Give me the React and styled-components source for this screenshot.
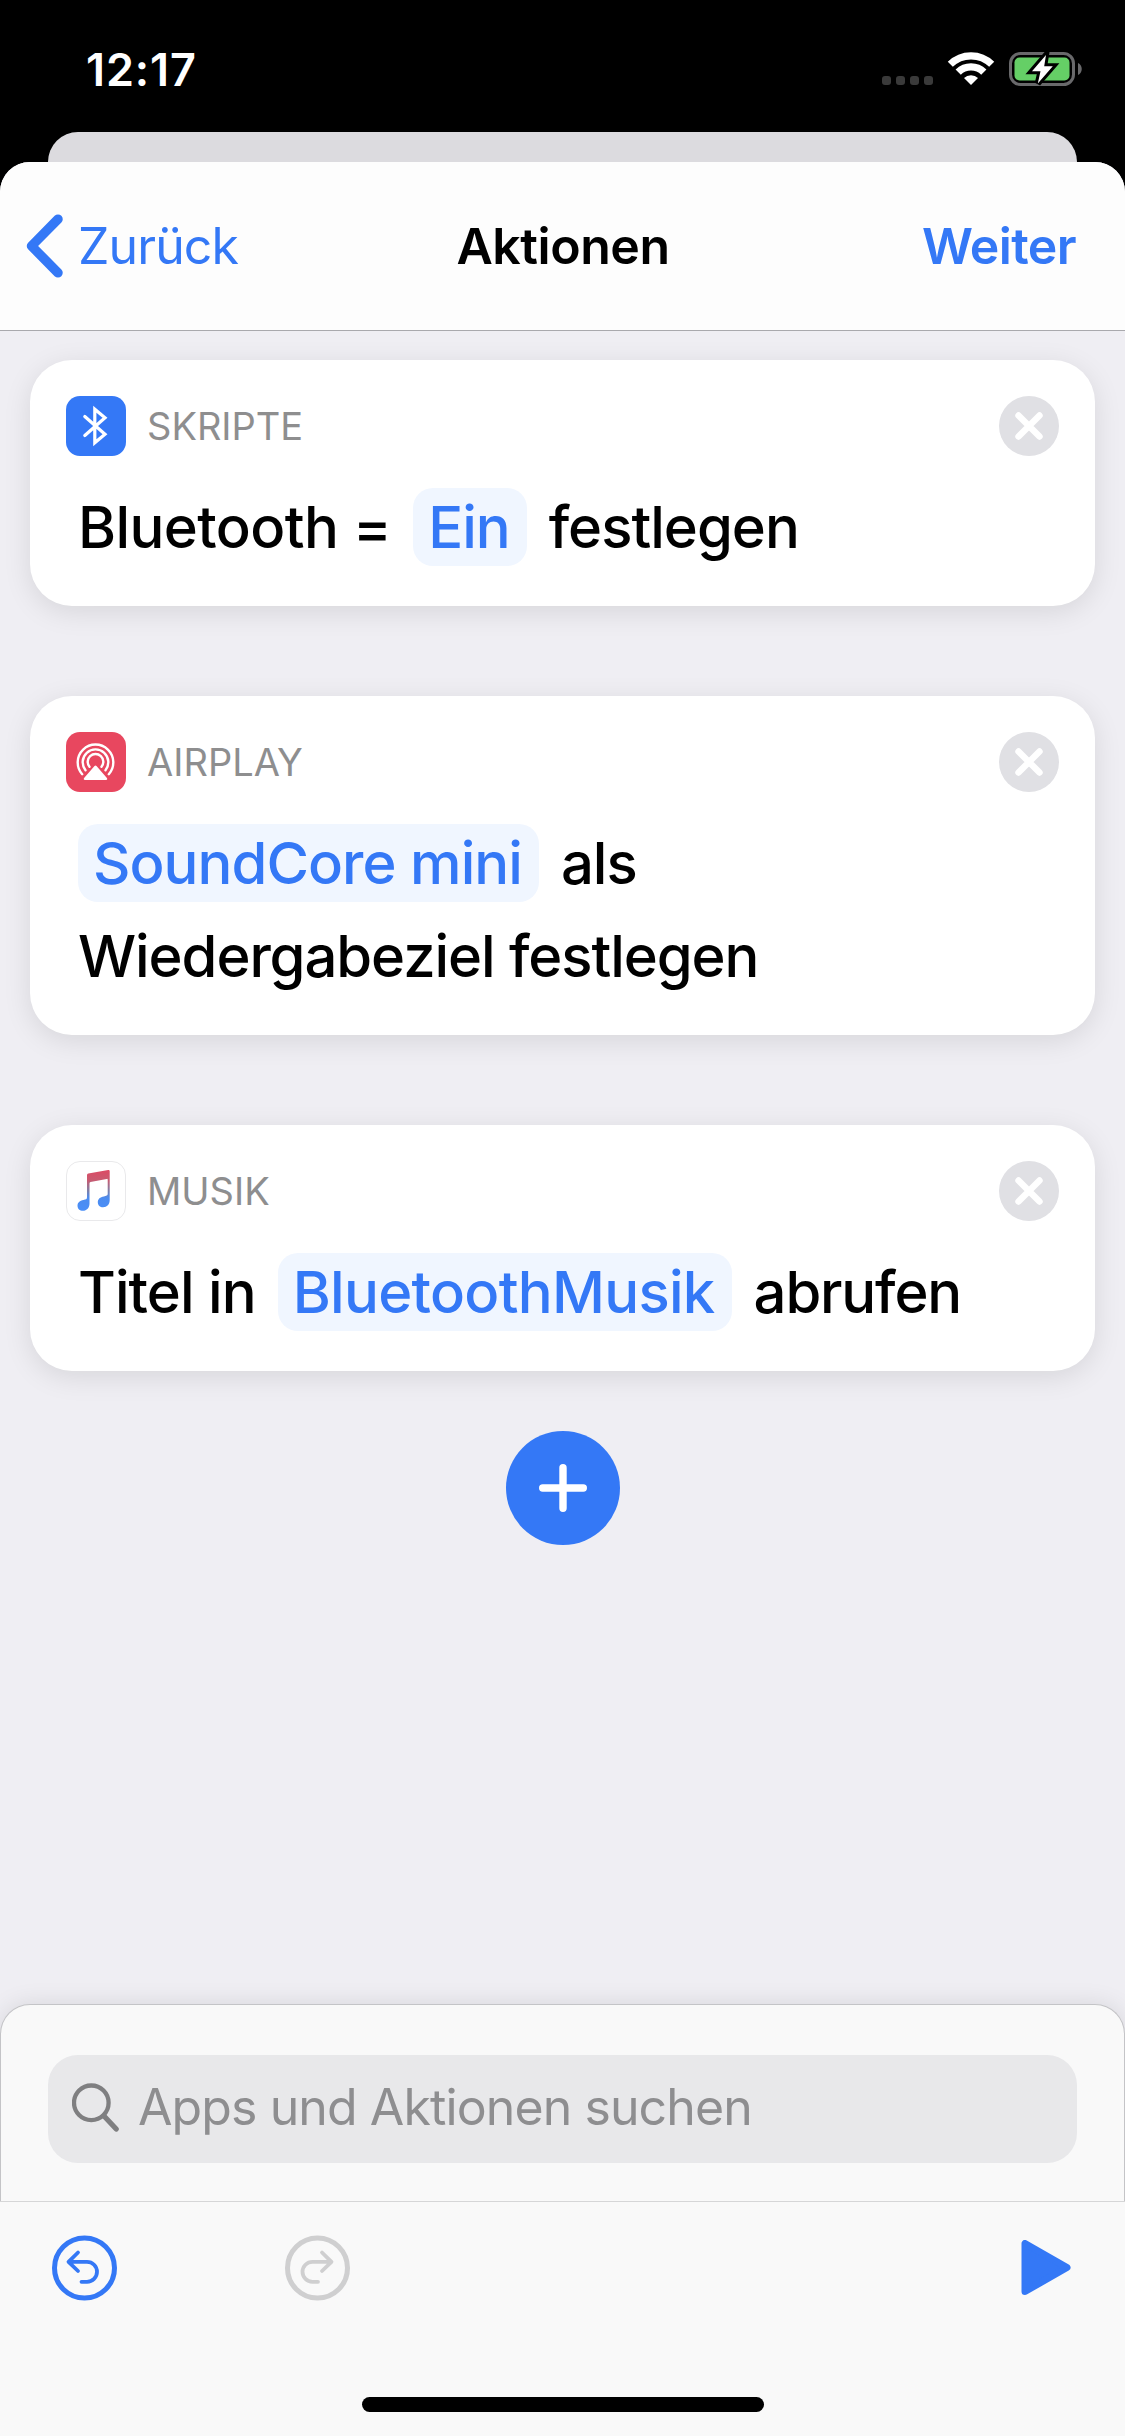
import React from "react";
import styled, { createGlobalStyle } from "styled-components";

const GlobalStyle = createGlobalStyle`
	* {
		box-sizing: border-box;
	}
	body {
		margin: 0;
		background: #000;
		font-family: Inter, "Liberation Sans", sans-serif;
	}
	svg {
		display: block;
		flex: none;
	}
	button {
		padding: 0;
		border: none;
		background: none;
		font: inherit;
		color: inherit;
		cursor: pointer;
	}
`;

const Screen = styled.div`
	width: 1125px;
	height: 2436px;
	display: flex;
	flex-direction: column;
	background: #000;
	overflow: hidden;
`;

const StatusBar = styled.div`
	height: 132px;
	padding: 6px 42px 0 86px;
	display: flex;
	align-items: center;
	justify-content: space-between;
	color: #fff;
`;

const Time = styled.span`
	font-size: 45px;
	font-weight: 600;
	letter-spacing: 0.9px;
`;

const StatusIcons = styled.div`
	display: flex;
	align-items: center;
	gap: 14px;
`;

const Dots = styled.div`
	display: flex;
	gap: 5px;
	margin-top: 23px;
`;

const Dot = styled.span`
	width: 9px;
	height: 9px;
	border-radius: 3px;
	background: #3a3a3a;
`;

const BackSheet = styled.div`
	height: 30px;
	margin: 0 48px;
	border-radius: 30px 30px 0 0;
	background: #dcdbdf;
`;

const Sheet = styled.div`
	flex: 1;
	display: flex;
	flex-direction: column;
	border-radius: 30px 30px 0 0;
	background: #efeef3;
	overflow: hidden;
`;

const NavBar = styled.div`
	height: 169px;
	padding: 0 49px 0 26px;
	display: grid;
	grid-template-columns: 1fr auto 1fr;
	align-items: center;
	background: #fdfdfd;
	border-bottom: 1px solid #a9a9ad;
	font-size: 50px;
	line-height: 60px;
`;

const BackButton = styled.button`
	display: flex;
	align-items: center;
	gap: 14px;
	color: #3478f6;
	letter-spacing: -0.9px;
`;

const Title = styled.div`
	font-weight: 600;
	letter-spacing: -0.45px;
	padding-left: 24px;
`;

const NextButton = styled.button`
	justify-self: end;
	font-weight: 600;
	color: #3478f6;
	letter-spacing: -0.6px;
`;

const Content = styled.div`
	flex: 1;
	padding: 29px 30px 0;
	display: flex;
	flex-direction: column;
	align-items: center;
`;

const CardList = styled.div`
	width: 100%;
	display: flex;
	flex-direction: column;
	gap: 90px;
`;

const Card = styled.div`
	padding: 36px 36px 33px;
	border-radius: 42px;
	background: #fff;
	box-shadow: 0 6px 28px rgba(0, 0, 0, 0.1);
`;

const CardHeader = styled.div`
	display: flex;
	align-items: center;
	height: 60px;
`;

const Label = styled.div`
	flex: 1;
	padding-left: 21px;
	font-size: 38px;
	line-height: 60px;
	color: #8e8e8f;
`;

const CardBody = styled.div`
	padding: 24px 0 0 12px;
`;

const Line = styled.div`
	height: 93px;
	display: flex;
	align-items: center;
	gap: 22px;
	font-size: 58px;
	font-weight: 500;
	line-height: 78px;
	white-space: nowrap;
`;

const Word = styled.span`
	letter-spacing: ${(props) => props.$tracking || -1}px;
`;

const Token = styled(Word)`
	height: 78px;
	padding: 0 17px 0 15px;
	border-radius: 20px;
	background: #f0f6ff;
	color: #3478f6;
`;

const AddButton = styled.button`
	width: 114px;
	height: 114px;
	margin-top: 60px;
	border-radius: 50%;
	display: flex;
	align-items: center;
	justify-content: center;
	background: #3478f6;
`;

const SearchPanel = styled.div`
	padding: 50px 47px 38px;
	border: 1px solid #c4c4c7;
	border-bottom: none;
	border-radius: 30px 30px 0 0;
	background: #f9f9f9;
	box-shadow: 0 0 24px rgba(0, 0, 0, 0.1);
`;

const SearchField = styled.div`
	height: 108px;
	padding: 0 24px 4px;
	display: flex;
	align-items: center;
	gap: 18px;
	border-radius: 30px;
	background: #e8e8ea;
	color: #8e8e90;
	font-size: 50px;
	letter-spacing: -0.9px;
`;

const Toolbar = styled.div`
	position: relative;
	height: 235px;
	padding: 33px 54px 24px 51px;
	display: flex;
	flex-direction: column;
	justify-content: space-between;
	background: #f9f9f9;
	border-top: 1px solid #d6d6d7;
`;

const Tools = styled.div`
	display: flex;
	align-items: center;
	gap: 167px;
`;

const PlayButton = styled.button`
	margin-left: auto;
`;

const HomeIndicator = styled.div`
	width: 402px;
	height: 15px;
	margin-right: -3px;
	align-self: center;
	border-radius: 8px;
	background: #000;
`;

const WifiIcon = () => (
	<svg width="48" height="34" viewBox="0 0 48 34" fill="none" stroke="#fff">
		<path d="M3.3 12.3a29.4 29.4 0 0 1 41.4 0" strokeWidth="7.2" />
		<path d="M11.2 20.2a18.1 18.1 0 0 1 25.6 0" strokeWidth="7.4" />
		<path d="M24 33l-7-7a10 10 0 0 1 14 0z" fill="#fff" stroke="none" />
	</svg>
);

const BatteryIcon = () => (
	<svg width="74" height="36" viewBox="0 0 74 36">
		<rect x="1.5" y="2.5" width="63" height="31" rx="10" fill="none" stroke="#69696b" strokeWidth="3" />
		<rect x="5.5" y="6.5" width="55" height="23" rx="5" fill="#65cf66" />
		<path d="M69 12c5 2 5 10 0 12z" fill="#69696b" />
		<path
			d="M37 4L23 20.2h8.5L28.8 32.5 43.8 15.3h-8.6z"
			fill="#fff"
			stroke="#000"
			strokeWidth="6"
			paintOrder="stroke"
		/>
	</svg>
);

const ChevronIcon = () => (
	<svg width="38" height="64" viewBox="0 0 38 64">
		<path
			d="M32 5.2L5.5 32 32 58.8"
			fill="none"
			stroke="#3478f6"
			strokeWidth="9.5"
			strokeLinecap="round"
			strokeLinejoin="round"
		/>
	</svg>
);

const BluetoothIcon = () => (
	<svg width="60" height="60" viewBox="0 0 60 60">
		<rect width="60" height="60" rx="14" fill="#3478f6" />
		<path
			d="M18.8 20.5L39 38.2l-10.2 8.6V13.2L39 21.8 18.8 39.5"
			fill="none"
			stroke="#fff"
			strokeWidth="3.2"
			strokeLinecap="round"
		/>
	</svg>
);

const AirPlayIcon = () => (
	<svg width="60" height="60" viewBox="0 0 60 60">
		<rect width="60" height="60" rx="14" fill="#e8475f" />
		<g fill="none" stroke="#fff" strokeWidth="2.4" strokeLinecap="round">
			<path d="M16.2 42.2a17.8 17.8 0 1 1 26.6 0" />
			<path d="M19.5 38.2a12.8 12.8 0 1 1 20 0" />
			<path d="M23.5 34.8a7.8 7.8 0 1 1 12 0" />
		</g>
		<path
			d="M28.5 34q1-1 2 0l10.4 12q1 1.9-.9 1.9H19q-1.9 0-.9-1.9z"
			fill="#fff"
			stroke="#e8475f"
			strokeWidth="2"
			paintOrder="stroke"
		/>
	</svg>
);

const MusicIcon = () => (
	<svg width="60" height="60" viewBox="0 0 60 60">
		<defs>
			<linearGradient id="note" x1="0" y1="9" x2="0" y2="50" gradientUnits="userSpaceOnUse">
				<stop offset="0" stopColor="#dc4a64" />
				<stop offset="0.25" stopColor="#c85a70" />
				<stop offset="0.5" stopColor="#7f7fa6" />
				<stop offset="0.68" stopColor="#4c8cf0" />
				<stop offset="1" stopColor="#4a8ff8" />
			</linearGradient>
		</defs>
		<rect x="0.5" y="0.5" width="59" height="59" rx="13.5" fill="#fff" stroke="#e9e9eb" />
		<path
			d="M21 14.2q0-1.3 1.3-1.6L42.2 9q1.5-.2 1.5 1.2V39c0 4.3-2.7 7.2-6.6 7.2-3 0-5.3-2-5.3-5 0-3.3 2.4-5.3 6-5.8 2.6-.4 3.9-.7 3.9-2.6V18.7q0-1-1-.8l-16.2 3.2q-1 .2-1 1.2V42.5c0 4.3-2.7 7.3-6.6 7.3-3.2 0-5.4-2-5.4-5 0-3.2 2.3-5.3 5.9-5.8 2.5-.4 3.6-.9 3.6-2.7z"
			fill="url(#note)"
		/>
	</svg>
);

const RemoveIcon = () => (
	<svg width="60" height="60" viewBox="0 0 60 60">
		<circle cx="30" cy="30" r="30" fill="#e0e0e4" />
		<path d="M19.5 19.5l21 21M40.5 19.5l-21 21" stroke="#fff" strokeWidth="6.4" strokeLinecap="round" />
	</svg>
);

const PlusIcon = () => (
	<svg width="48" height="48" viewBox="0 0 48 48">
		<path d="M24 3.7v40.6M3.7 24h40.6" stroke="#fff" strokeWidth="7.4" strokeLinecap="round" />
	</svg>
);

const SearchIcon = () => (
	<svg width="48" height="50" viewBox="0 0 48 50" fill="none" stroke="#7f7f81" strokeLinecap="round">
		<circle cx="19.3" cy="20.8" r="17.3" strokeWidth="4.3" />
		<path d="M32 34l12.2 13" strokeWidth="5.2" />
	</svg>
);

const UndoIcon = () => (
	<svg width="66" height="66" viewBox="0 0 66 66" fill="none" stroke="#3478f6" strokeLinecap="round" strokeLinejoin="round">
		<circle cx="33.5" cy="33" r="30" strokeWidth="5" />
		<path d="M27 17.5L17.5 26.8 27 36M18 26.8h18a10 10 0 0 1 0 20h-5.5" strokeWidth="3.8" />
	</svg>
);

const RedoIcon = () => (
	<svg width="66" height="66" viewBox="0 0 66 66" fill="none" stroke="#cfcfd0" strokeLinecap="round" strokeLinejoin="round">
		<circle cx="33.5" cy="33" r="30" strokeWidth="5" />
		<path d="M38 17.5l9.5 9.3L38 36M47 26.8H28.500a10 10 0 0 0 0 20H34" strokeWidth="3.8" />
	</svg>
);

const PlayIcon = () => (
	<svg width="50" height="56" viewBox="0 0 50 56">
		<path
			d="M4 3.5v48l42-24z"
			fill="#3478f6"
			stroke="#3478f6"
			strokeWidth="7"
			strokeLinejoin="round"
		/>
	</svg>
);

const actions = [
	{
		label: "SKRIPTE",
		icon: <BluetoothIcon />,
		lines: [
			[
				{ text: "Bluetooth =", tracking: -0.6 },
				{ text: "Ein", token: true },
				{ text: "festlegen" },
			],
		],
	},
	{
		label: "AIRPLAY",
		icon: <AirPlayIcon />,
		lines: [
			[{ text: "SoundCore mini", token: true, tracking: -0.95 }, { text: "als" }],
			[{ text: "Wiedergabeziel festlegen", tracking: -1.08 }],
		],
	},
	{
		label: "MUSIK",
		icon: <MusicIcon />,
		lines: [
			[
				{ text: "Titel in", tracking: -0.95 },
				{ text: "BluetoothMusik", token: true, tracking: -0.7 },
				{ text: "abrufen", tracking: -1.15 },
			],
		],
	},
];

const App = () => {
	return (
		<Screen>
			<GlobalStyle />
			<StatusBar>
				<Time>12:17</Time>
				<StatusIcons>
					<Dots>
						<Dot />
						<Dot />
						<Dot />
						<Dot />
					</Dots>
					<WifiIcon />
					<BatteryIcon />
				</StatusIcons>
			</StatusBar>
			<BackSheet />
			<Sheet>
				<NavBar>
					<BackButton>
						<ChevronIcon />
						Zurück
					</BackButton>
					<Title>Aktionen</Title>
					<NextButton>Weiter</NextButton>
				</NavBar>
				<Content>
					<CardList>
						{actions.map((action) => (
							<Card key={action.label}>
								<CardHeader>
									{action.icon}
									<Label>{action.label}</Label>
									<button aria-label="Entfernen">
										<RemoveIcon />
									</button>
								</CardHeader>
								<CardBody>
									{action.lines.map((line, index) => (
										<Line key={index}>
											{line.map((part) => {
												const Part = part.token ? Token : Word;
												return (
													<Part key={part.text} $tracking={part.tracking}>
														{part.text}
													</Part>
												);
											})}
										</Line>
									))}
								</CardBody>
							</Card>
						))}
					</CardList>
					<AddButton aria-label="Hinzufügen">
						<PlusIcon />
					</AddButton>
				</Content>
				<SearchPanel>
					<SearchField>
						<SearchIcon />
						Apps und Aktionen suchen
					</SearchField>
				</SearchPanel>
				<Toolbar>
					<Tools>
						<UndoIcon />
						<RedoIcon />
						<PlayButton aria-label="Ausführen">
							<PlayIcon />
						</PlayButton>
					</Tools>
					<HomeIndicator />
				</Toolbar>
			</Sheet>
		</Screen>
	);
};

export default App;
